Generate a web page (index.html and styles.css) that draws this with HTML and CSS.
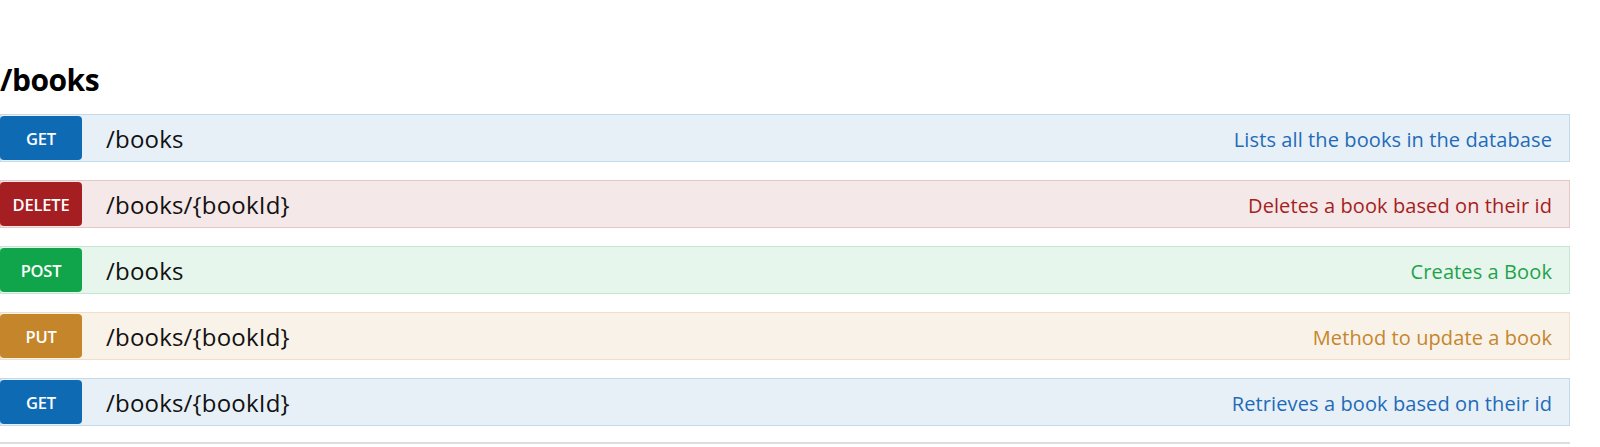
FILE: index.html
```html
<!DOCTYPE html>
<html lang="en">
<head>
<meta charset="utf-8">
<title>/books</title>
<link rel="stylesheet" href="styles.css">
</head>
<body>
<section class="resource">
  <h2 class="resource-title">/books</h2>
  <ul class="ops">
    <li class="op op-get">
      <span class="method">GET</span>
      <span class="path">/books</span>
      <span class="summary">Lists all the books in the database</span>
    </li>
    <li class="op op-delete">
      <span class="method">DELETE</span>
      <span class="path">/books/{bookId}</span>
      <span class="summary">Deletes a book based on their id</span>
    </li>
    <li class="op op-post">
      <span class="method">POST</span>
      <span class="path">/books</span>
      <span class="summary">Creates a Book</span>
    </li>
    <li class="op op-put">
      <span class="method">PUT</span>
      <span class="path">/books/{bookId}</span>
      <span class="summary">Method to update a book</span>
    </li>
    <li class="op op-get">
      <span class="method">GET</span>
      <span class="path">/books/{bookId}</span>
      <span class="summary">Retrieves a book based on their id</span>
    </li>
  </ul>
  <div class="divider"></div>
</section>
</body>
</html>
```

FILE: styles.css
```css
html, body {
  margin: 0;
  padding: 0;
  background: #ffffff;
}

body {
  font-family: "Open Sans", "DejaVu Sans", sans-serif;
  color: #000000;
}

.resource {
  width: 1570px;
  padding-top: 60px;
}

.resource-title {
  margin: 0 0 14px 0;
  font-size: 30px;
  line-height: 40px;
  font-weight: 700;
  letter-spacing: -0.5px;
}

.ops {
  list-style: none;
  margin: 0;
  padding: 0;
  display: flex;
  flex-direction: column;
  gap: 18px;
}

.op {
  display: flex;
  align-items: center;
  height: 48px;
  box-sizing: border-box;
  border: 1px solid;
  padding: 1px 0;
}

.method {
  flex: 0 0 auto;
  width: 82px;
  height: 44px;
  margin-left: -1px;
  border-radius: 4px;
  color: #ffffff;
  font-size: 16.5px;
  font-weight: 600;
  display: flex;
  align-items: center;
  justify-content: center;
  letter-spacing: -0.2px;
}

.path {
  margin-left: 24px;
  font-size: 24px;
  color: #111111;
  letter-spacing: 0.2px;
}

.summary {
  margin-left: auto;
  padding-right: 17px;
  font-size: 20px;
  font-weight: 500;
  letter-spacing: 0.1px;
  position: relative;
  top: 1px;
}

.op-get { background: #e7f0f7; border-color: #c3d9ec; }
.op-get .method { background: #0f6ab4; }
.op-get .summary { color: #1f6bb8; }

.op-delete { background: #f5e8e8; border-color: #e8c6c7; }
.op-delete .method { background: #a41e22; }
.op-delete .summary { color: #a41e22; }

.op-post { background: #e7f6ec; border-color: #c3e8d1; }
.op-post .method { background: #10a54a; }
.op-post .summary { color: #1ea34a; }

.op-put { background: #f9f2e9; border-color: #f0e0ca; }
.op-put .method { background: #c5862b; }
.op-put .summary { color: #c5862b; }

.divider {
  margin-top: 16px;
  height: 2px;
  background: #dddddd;
}
```
